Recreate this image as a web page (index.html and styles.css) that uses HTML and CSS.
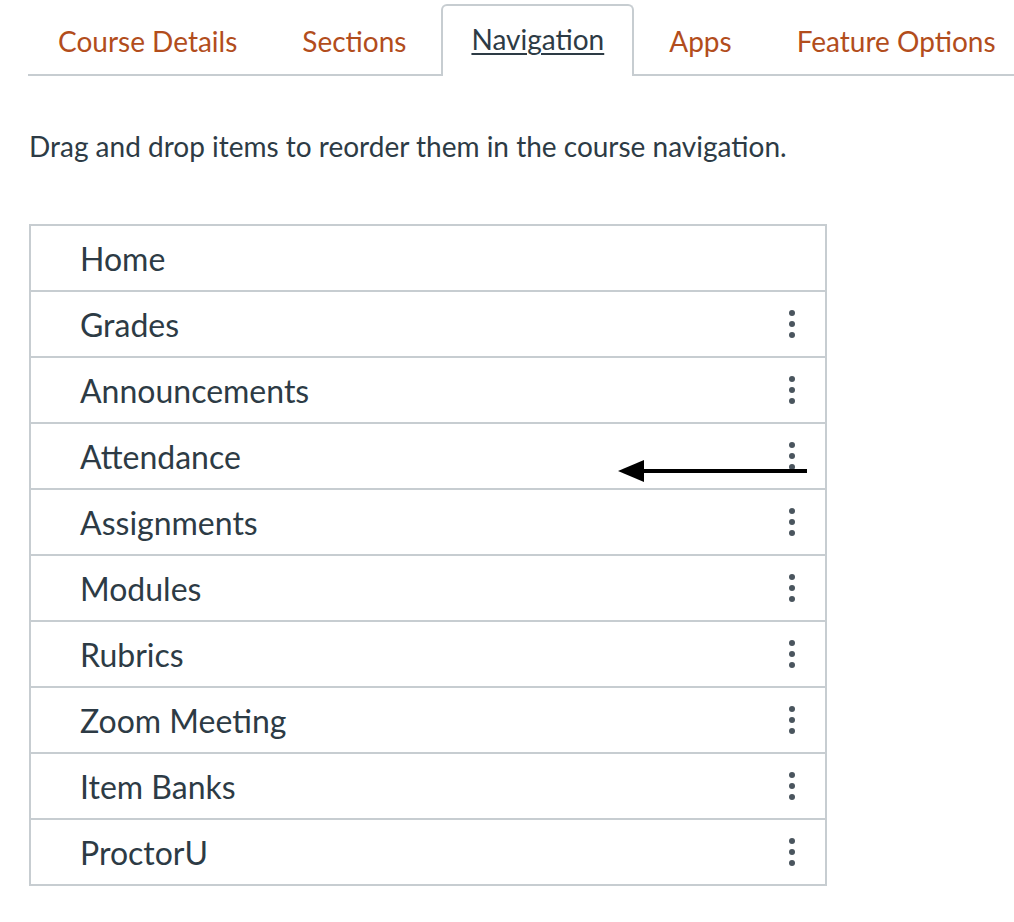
FILE: index.html
```html
<!DOCTYPE html>
<html>
<head>
<meta charset="utf-8">
<link rel="stylesheet" href="styles.css">
</head>
<body>
<div class="page">
  <nav class="tabs">
    <a class="tab">Course Details</a>
    <a class="tab">Sections</a>
    <a class="tab active">Navigation</a>
    <a class="tab">Apps</a>
    <a class="tab">Feature Options</a>
  </nav>
  <p class="desc">Drag and drop items to reorder them in the course navigation.</p>
  <ul class="nav-list">
    <li class="item"><span>Home</span></li>
    <li class="item"><span>Grades</span><span class="kebab"><i></i><i></i><i></i></span></li>
    <li class="item"><span>Announcements</span><span class="kebab"><i></i><i></i><i></i></span></li>
    <li class="item"><span>Attendance</span><span class="kebab"><i></i><i></i><i></i></span>
      <svg class="arrow" width="189" height="26" viewBox="0 0 189 26"><polygon points="0,13 26,2 26,24" fill="#000"/><rect x="20" y="11" width="169" height="4" fill="#000"/></svg>
    </li>
    <li class="item"><span>Assignments</span><span class="kebab"><i></i><i></i><i></i></span></li>
    <li class="item"><span>Modules</span><span class="kebab"><i></i><i></i><i></i></span></li>
    <li class="item"><span>Rubrics</span><span class="kebab"><i></i><i></i><i></i></span></li>
    <li class="item"><span>Zoom Meeting</span><span class="kebab"><i></i><i></i><i></i></span></li>
    <li class="item"><span>Item Banks</span><span class="kebab"><i></i><i></i><i></i></span></li>
    <li class="item"><span>ProctorU</span><span class="kebab"><i></i><i></i><i></i></span></li>
  </ul>
</div>
</body>
</html>
```
FILE: styles.css
```css
html, body {
  margin: 0;
  padding: 0;
  background: #fff;
  overflow: hidden;
}
body {
  font-family: Lato, "Open Sans", sans-serif;
  color: #2d3b45;
}
.page {
  padding: 4px 0 0 28px;
}
.tabs {
  display: flex;
  gap: 5px;
  border-bottom: 2px solid #c7cdd1;
  height: 70px;
  align-items: flex-end;
  white-space: nowrap;
}
.tab {
  display: block;
  box-sizing: border-box;
  height: 70px;
  line-height: 66px;
  padding: 0 28px;
  font-size: 28px;
  color: #b24d1c;
  margin-bottom: -2px;
  border: 2px solid transparent;
  border-bottom: none;
  border-radius: 6px 6px 0 0;
  flex-shrink: 0;
}
.tab.active {
  color: #2d3b45;
  text-decoration: underline;
  text-underline-offset: 3px;
  text-decoration-thickness: 2px;
  border-color: #c7cdd1;
  background: #fff;
  height: 72px;
}
.desc {
  margin: 55px 0 0 1px;
  font-size: 28px;
  line-height: 30px;
}
.nav-list {
  list-style: none;
  margin: 63px 0 0 1px;
  padding: 0;
  width: 798px;
  border: 2px solid #c7cdd1;
  box-sizing: border-box;
}
.item {
  position: relative;
  display: flex;
  align-items: center;
  justify-content: space-between;
  height: 64px;
  padding: 0 30px 0 49px;
  font-size: 32px;
  border-bottom: 2px solid #c7cdd1;
}
.item:last-child { border-bottom: none; }
.kebab {
  display: flex;
  flex-direction: column;
  gap: 5px;
}
.kebab i {
  display: block;
  width: 6px;
  height: 6px;
  border-radius: 50%;
  background: #4a555e;
}
.arrow {
  position: absolute;
  left: 587px;
  top: 34px;
}
```
